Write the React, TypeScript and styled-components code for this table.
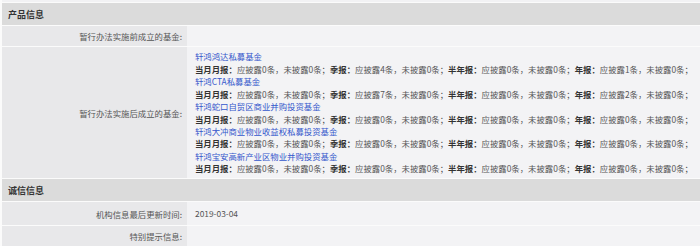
import { FC } from 'react';
import styled, { createGlobalStyle } from 'styled-components';

interface Fund {
  name: string;
  // [应披露, 未披露] for 当月月报, 季报, 半年报, 年报
  counts: [number, number][];
}

const funds: Fund[] = [
  { name: '轩鸿鸿达私募基金', counts: [[0, 0], [4, 0], [0, 0], [1, 0]] },
  { name: '轩鸿CTA私募基金', counts: [[0, 0], [7, 0], [0, 0], [2, 0]] },
  { name: '轩鸿蛇口自贸区商业并购投资基金', counts: [[0, 0], [0, 0], [0, 0], [0, 0]] },
  { name: '轩鸿大冲商业物业收益权私募投资基金', counts: [[0, 0], [0, 0], [0, 0], [0, 0]] },
  { name: '轩鸿宝安高新产业区物业并购投资基金', counts: [[0, 0], [0, 0], [0, 0], [0, 0]] },
];

const periods = ['当月月报', '季报', '半年报', '年报'];

const GlobalStyle = createGlobalStyle`
  html, body {
    margin: 0;
    padding: 0;
    background: #ffffff;
  }
  body {
    font-family: "Noto Sans CJK SC", "Noto Sans", sans-serif;
    font-size: 8.4px;
    color: #555;
  }
`;

const Table = styled.div`
  display: flex;
  flex-direction: column;
  gap: 1px;
  padding-left: 2px;
  background: #fbfbfb;
  width: 720px;
`;

const Remnant = styled.div`
  height: 2px;
  background: #f2f2f4;
`;

const SectionHeader = styled.div`
  display: flex;
  align-items: center;
  height: 22px;
  padding-left: 6px;
  background: #dbdbdb;
  color: #333;
  font-size: 9px;
  font-weight: 700;
`;

const Row = styled.div<{ $height: number }>`
  display: grid;
  grid-template-columns: 185px 1fr;
  height: ${p => p.$height}px;
`;

const Label = styled.div`
  display: flex;
  align-items: center;
  justify-content: flex-end;
  padding-right: 5px;
  background: #e8e8ea;
  color: #555;
  white-space: nowrap;
`;

const Value = styled.div`
  display: flex;
  flex-direction: column;
  justify-content: center;
  padding: 0 0 0 8px;
  background: #f3f3f5;
  color: #555;
  line-height: 12.4px;
  white-space: nowrap;
`;

const FundLink = styled.a`
  color: #3457cc;
  text-decoration: none;
  cursor: pointer;
`;

const Bold = styled.b`
  color: #333;
  font-weight: 700;
`;

const ReportLine: FC<{ counts: [number, number][] }> = ({ counts }) => (
  <div>
    {counts.map(([due, missed], i) => (
      <span key={i}>
        <Bold>{periods[i]}：</Bold>
        {`应披露${due}条，未披露${missed}条；`}
      </span>
    ))}
  </div>
);

const App: FC = () => {
  return (
    <>
      <GlobalStyle />
      <Table>
        <Remnant />
        <SectionHeader>产品信息</SectionHeader>
        <Row $height={20}>
          <Label>暂行办法实施前成立的基金:</Label>
          <Value />
        </Row>
        <Row $height={131}>
          <Label>暂行办法实施后成立的基金:</Label>
          <Value>
            {funds.map(f => (
              <div key={f.name}>
                <div>
                  <FundLink>{f.name}</FundLink>
                </div>
                <ReportLine counts={f.counts} />
              </div>
            ))}
          </Value>
        </Row>
        <SectionHeader>诚信信息</SectionHeader>
        <Row $height={23}>
          <Label>机构信息最后更新时间:</Label>
          <Value>2019-03-04</Value>
        </Row>
        <Row $height={20}>
          <Label>特别提示信息:</Label>
          <Value />
        </Row>
      </Table>
    </>
  );
};

export default App;
